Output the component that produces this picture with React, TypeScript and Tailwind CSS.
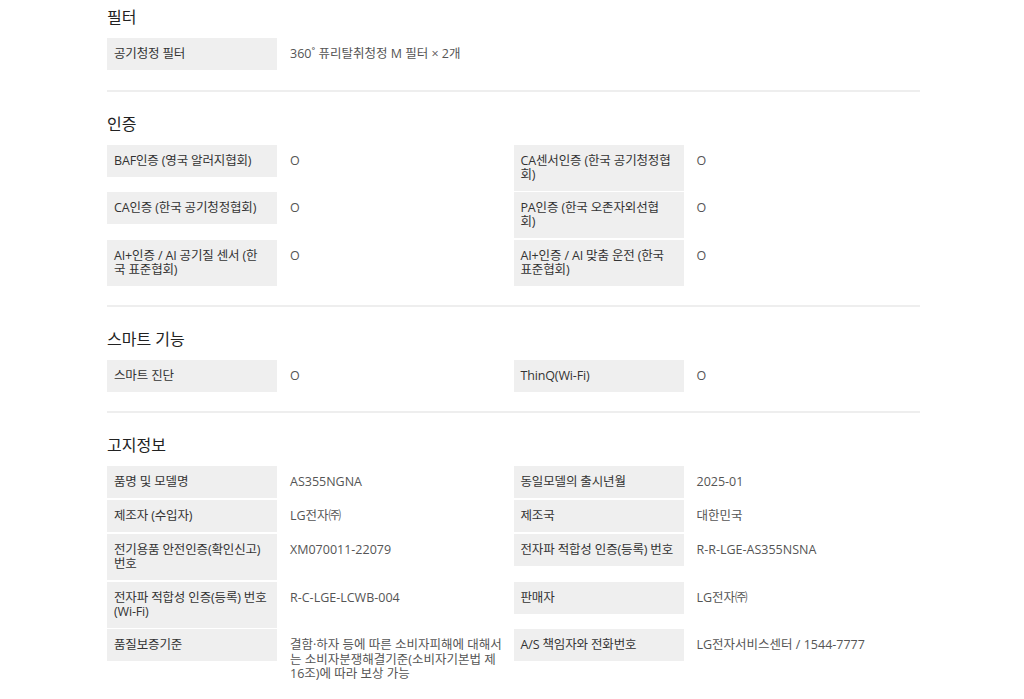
import React from "react";

type Item = { label: string; value: string };

const sections: { title: string; items: (Item | null)[] }[] = [
  {
    title: "필터",
    items: [{ label: "공기청정 필터", value: "360˚ 퓨리탈취청정 M 필터 × 2개" }],
  },
  {
    title: "인증",
    items: [
      { label: "BAF인증 (영국 알러지협회)", value: "O" },
      { label: "CA센서인증 (한국 공기청정협회)", value: "O" },
      { label: "CA인증 (한국 공기청정협회)", value: "O" },
      { label: "PA인증 (한국 오존자외선협회)", value: "O" },
      { label: "AI+인증 / AI 공기질 센서 (한국 표준협회)", value: "O" },
      { label: "AI+인증 / AI 맞춤 운전 (한국 표준협회)", value: "O" },
    ],
  },
  {
    title: "스마트 기능",
    items: [
      { label: "스마트 진단", value: "O" },
      { label: "ThinQ(Wi-Fi)", value: "O" },
    ],
  },
  {
    title: "고지정보",
    items: [
      { label: "품명 및 모델명", value: "AS355NGNA" },
      { label: "동일모델의 출시년월", value: "2025-01" },
      { label: "제조자 (수입자)", value: "LG전자㈜" },
      { label: "제조국", value: "대한민국" },
      { label: "전기용품 안전인증(확인신고) 번호", value: "XM070011-22079" },
      { label: "전자파 적합성 인증(등록) 번호", value: "R-R-LGE-AS355NSNA" },
      { label: "전자파 적합성 인증(등록) 번호 (Wi-Fi)", value: "R-C-LGE-LCWB-004" },
      { label: "판매자", value: "LG전자㈜" },
      {
        label: "품질보증기준",
        value: "결함·하자 등에 따른 소비자피해에 대해서는 소비자분쟁해결기준(소비자기본법 제16조)에 따라 보상 가능",
      },
      { label: "A/S 책임자와 전화번호", value: "LG전자서비스센터 / 1544-7777" },
    ],
  },
];

function Row({ item }: { item: Item }) {
  return (
    <div className="flex items-start">
      <div className="w-[170px] shrink-0 bg-[#efefef] pl-[7px] pr-[10.1px] py-[9px] text-[12.5px] leading-[14px] tracking-[-0.15px] text-[#333]">
        {item.label}
      </div>
      <div className="flex-1 pl-[13px] pr-[8px] py-[9px] text-[12.5px] leading-[14.5px] text-[#555]">
        {item.value}
      </div>
    </div>
  );
}

export default function App() {
  return (
    <div
      className="min-h-[699px] bg-white"
      style={{ fontFamily: '"Open Sans", "Noto Sans CJK KR", sans-serif' }}
    >
      <div className="ml-[107px] w-[813px]">
        {sections.map((s, i) => (
          <section
            key={s.title}
            className={
              (i === 0 ? "pt-[6px] " : "pt-[21px] ") +
              (i === sections.length - 1 ? "pb-[20px]" : "pb-[19px] border-b-2 border-[#eeeeee]")
            }
          >
            <h2 className="text-[16px] leading-[22px] text-[#222] font-normal mb-[10px]">{s.title}</h2>
            <div className="grid grid-cols-2 gap-y-[1.5px]">
              {s.items.map((it, j) => (it ? <Row key={j} item={it} /> : <div key={j} />))}
            </div>
          </section>
        ))}
      </div>
    </div>
  );
}
